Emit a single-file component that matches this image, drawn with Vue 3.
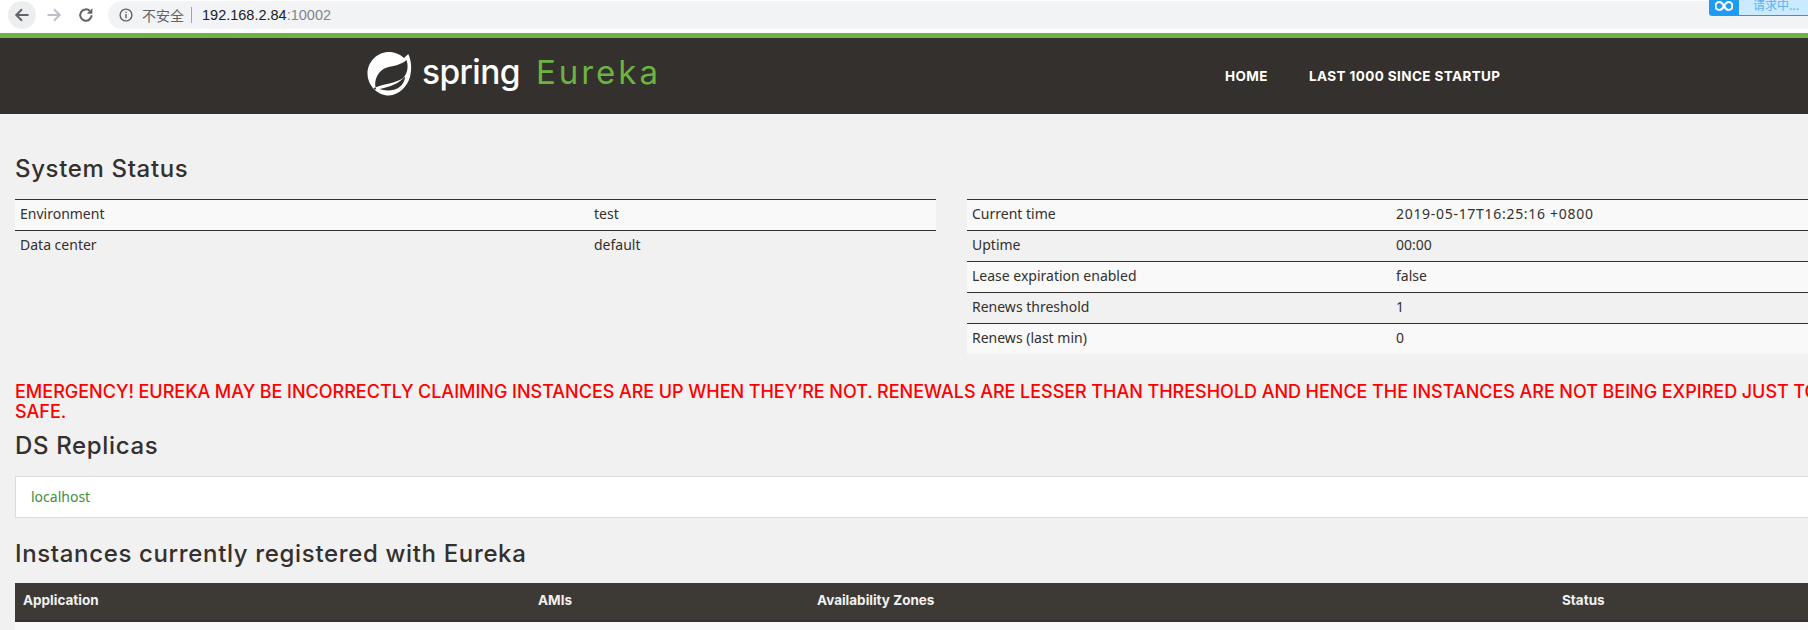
<script setup>
const leftRows = [
  ['Environment', 'test'],
  ['Data center', 'default']
]
const rightRows = [
  ['Current time', '2019-05-17T16:25:16 +0800'],
  ['Uptime', '00:00'],
  ['Lease expiration enabled', 'false'],
  ['Renews threshold', '1'],
  ['Renews (last min)', '0']
]
</script>

<template>
  <div class="viewport">
    <div class="chrome">
      <button class="nav-btn active" aria-label="back">
        <svg width="18" height="18" viewBox="0 0 18 18"><path d="M15.500 9H3.600M9 3.300 3.300 9 9 14.700" fill="none" stroke="#5f6368" stroke-width="2"/></svg>
      </button>
      <button class="nav-btn" aria-label="forward">
        <svg width="18" height="18" viewBox="0 0 18 18"><path d="M2.500 9h11.900M9 3.300 14.700 9 9 14.700" fill="none" stroke="#bdc1c6" stroke-width="2"/></svg>
      </button>
      <button class="nav-btn" aria-label="reload">
        <svg width="18" height="18" viewBox="0 0 18 18"><path d="M14.600 9.200a5.700 5.700 0 1 1-1.700-4.200" fill="none" stroke="#5f6368" stroke-width="2"/><path d="M15.400 2.200v5.600H9.800z" fill="#5f6368"/></svg>
      </button>
      <div class="omnibox">
        <svg class="info" width="14" height="14" viewBox="0 0 14 14"><circle cx="7" cy="7" r="5.900" fill="none" stroke="#5f6368" stroke-width="1.400"/><path d="M6.300 6h1.400v4.200H6.300zM6.300 3.700h1.400v1.400H6.300z" fill="#5f6368"/></svg>
        <span class="insecure">不安全</span>
        <span class="sep"></span>
        <span class="host">192.168.2.84</span><span class="port">:10002</span>
      </div>
    </div>
    <div class="ext-badge">
      <span class="ext-icon">
        <svg width="18" height="12" viewBox="0 0 18 12"><path d="M9 6C7.500 3.200 6.200 2 4.500 2a4 4 0 0 0 0 8C6.200 10 7.500 8.800 9 6c1.500-2.800 2.800-4 4.500-4a4 4 0 0 1 0 8C11.800 10 10.500 8.800 9 6z" fill="none" stroke="#fff" stroke-width="2.200"/></svg>
      </span>
      <span class="ext-text">请求中...</span>
    </div>

    <div class="page">
      <header class="navbar">
        <div class="brand">
          <svg class="leaf" width="46" height="46" viewBox="0 0 46 46">
            <path d="M22 1C28 1 33 3.500 37 7L41.300 3C44.500 10 45 18 43 26C40 36 32 44 22 44.500C10 44.500.500 34 .500 22.500C.500 11 10 1 22 1Z" fill="#fff"/>
            <path d="M8.500 36.500C7 29 11 19 20 16.500C27 14.700 34 14 39.500 9C42 16 40 24 35.500 27.500C29 32 16 33 8.500 36.500Z" fill="#34302d"/>
            <path d="M12.500 38C22 36 32 33 38 25.500C38 32 33 37 27 38.800C22 40 16 39.500 12.500 38Z" fill="#34302d"/>
            <circle cx="8" cy="37.500" r="1" fill="#34302d"/>
          </svg>
          <span class="spring">spring</span>
          <span class="eureka">Eureka</span>
        </div>
        <nav class="links">
          <a>HOME</a>
          <a>LAST 1000 SINCE STARTUP</a>
        </nav>
      </header>

      <main class="content">
        <h2 class="status-title">System Status</h2>
        <div class="status-grid">
          <table class="kv left">
            <tbody>
              <tr v-for="r in leftRows" :key="r[0]"><td>{{ r[0] }}</td><td>{{ r[1] }}</td></tr>
            </tbody>
          </table>
          <table class="kv right">
            <tbody>
              <tr v-for="r in rightRows" :key="r[0]"><td>{{ r[0] }}</td><td>{{ r[1] }}</td></tr>
            </tbody>
          </table>
        </div>

        <h4 class="emergency">EMERGENCY! EUREKA MAY BE INCORRECTLY CLAIMING INSTANCES ARE UP WHEN THEY’RE NOT. RENEWALS ARE LESSER THAN THRESHOLD AND HENCE THE INSTANCES ARE NOT BEING EXPIRED JUST TO BE<br />SAFE.</h4>

        <h2 class="replicas-title">DS Replicas</h2>
        <div class="well"><a>localhost</a></div>

        <h2 class="instances-title">Instances currently registered with Eureka</h2>
        <table class="instances">
          <thead>
            <tr><th>Application</th><th>AMIs</th><th>Availability Zones</th><th>Status</th></tr>
          </thead>
          <tbody>
            <tr><td colspan="4"></td></tr>
          </tbody>
        </table>
      </main>
    </div>
  </div>
</template>

<style>
html, body { margin: 0; overflow: hidden; background: #f1f1f1; }
</style>

<style scoped>
.viewport {
  width: 1808px;
  height: 630px;
  overflow: hidden;
  position: relative;
  background: #f1f1f1;
  font-family: "Noto Sans", "Open Sans", sans-serif;
  color: #34302d;
}
.chrome {
  height: 33px;
  box-sizing: border-box;
  padding: 1px 0 4px 8px;
  background: #fff;
  display: flex;
  align-items: center;
}
.nav-btn {
  width: 28px;
  height: 28px;
  margin-right: 4px;
  padding: 0;
  border: 0;
  border-radius: 50%;
  background: transparent;
  display: flex;
  align-items: center;
  justify-content: center;
}
.nav-btn.active { background: #eceef0; }
.omnibox {
  flex: 1;
  height: 28px;
  margin-left: 4px;
  padding-left: 11px;
  background: #f1f3f4;
  border-radius: 14px 0 0 14px;
  display: flex;
  align-items: center;
  font-family: "Liberation Sans", "Noto Sans CJK SC", sans-serif;
  font-size: 14.500px;
}
.info { margin-right: 9px; }
.insecure { font-family: "Noto Sans CJK SC", sans-serif; font-size: 14px; color: #5f6368; }
.sep { width: 1px; height: 16px; background: #a0a3a7; margin: 0 10px 0 7px; }
.host { color: #202124; }
.port { color: #80868b; }
.ext-badge {
  position: absolute;
  top: 0;
  left: 1709px;
  width: 99px;
  height: 16px;
  display: flex;
  overflow: hidden;
  border-radius: 0 0 0 3px;
  background: #cbeafd;
  border-bottom: 1px solid #1e9bf5;
  box-sizing: border-box;
}
.ext-icon {
  width: 30px;
  background: #1e9bf5;
  display: flex;
  justify-content: center;
  align-items: flex-start;
}
.ext-text {
  margin: -4px 0 0 14px;
  font-family: "Noto Sans CJK SC", sans-serif;
  font-size: 12px;
  line-height: 18px;
  color: #58b4f3;
}
.page { width: 1903px; }
.navbar {
  height: 81px;
  box-sizing: border-box;
  border-top: 5px solid #6db33f;
  background: #34302d;
  display: flex;
  align-items: center;
  padding-left: 367px;
}
.brand { display: flex; align-items: center; height: 76px; width: 858px; }
.leaf { flex: none; margin-right: 9px; margin-top: -4px; }
.spring {
  font-family: "Inter", sans-serif;
  font-size: 33.500px;
  font-weight: 500;
  line-height: 46px;
  color: #fff;
  letter-spacing: -0.600px;
  margin-top: -9px;
}
.eureka {
  font-family: "Inter", sans-serif;
  font-weight: 400;
  font-size: 33px;
  line-height: 46px;
  color: #6db33f;
  margin: -9px 0 0 16px;
  letter-spacing: 3px;
}
.links {
  display: flex;
  gap: 41px;
  font-family: "Inter", sans-serif;
  font-size: 13.500px;
  font-weight: 700;
  letter-spacing: 0.400px;
  color: #fff;
}
.content { padding: 39px 15px 0; }
h2 {
  margin: 0;
  font-family: "Inter", sans-serif;
  font-weight: 500;
  font-size: 24px;
  line-height: 28px;
  letter-spacing: 0.650px;
  color: #34302d;
}
.status-title { padding-top: 2px; }
.status-grid {
  display: grid;
  grid-template-columns: 921px 921px;
  column-gap: 31px;
  margin-top: 16px;
  align-items: start;
}
.kv {
  border-collapse: separate;
  border-spacing: 0;
  table-layout: fixed;
  width: 100%;
  font-size: 14px;
}
.kv td {
  height: 27px;
  padding: 0 5px 3px;
  border-top: 1px solid #34302d;
  box-sizing: content-box;
}
.kv tr:nth-child(odd) td { background: #f9f9f9; }
.kv.left td:first-child { width: 564px; }
.kv.right td:first-child { width: 414px; }
.kv.right tr:first-child td:last-child { letter-spacing: 0.700px; }
.emergency {
  margin: 28px 0 0;
  font-family: "Inter", sans-serif;
  font-weight: 500;
  font-size: 18px;
  line-height: 20px;
  word-spacing: -0.250px;
  color: #f00;
  white-space: nowrap;
}
.replicas-title { margin-top: 10px; }
.well {
  margin-top: 16px;
  height: 42px;
  box-sizing: border-box;
  padding: 0 15px 2px;
  background: #fff;
  border: 1px solid #dcdcdc;
  display: flex;
  align-items: center;
  font-size: 14px;
  color: #3e8f3e;
}
.instances-title { margin-top: 22px; }
.instances {
  width: 100%;
  margin-top: 15px;
  border-collapse: collapse;
  table-layout: fixed;
}
.instances th {
  height: 38px;
  padding: 0 8px 4px;
  box-sizing: border-box;
  background: #3d3a36;
  border-bottom: 2px solid #34302d;
  color: #f1f1f1;
  text-align: left;
  font-family: "Inter", sans-serif;
  font-size: 13.500px;
  font-weight: 700;
}
.instances th:nth-child(1) { width: 515px; }
.instances th:nth-child(2) { width: 279px; }
.instances th:nth-child(3) { width: 745px; }
.instances td { height: 30px; background: #f9f9f9; }
</style>
